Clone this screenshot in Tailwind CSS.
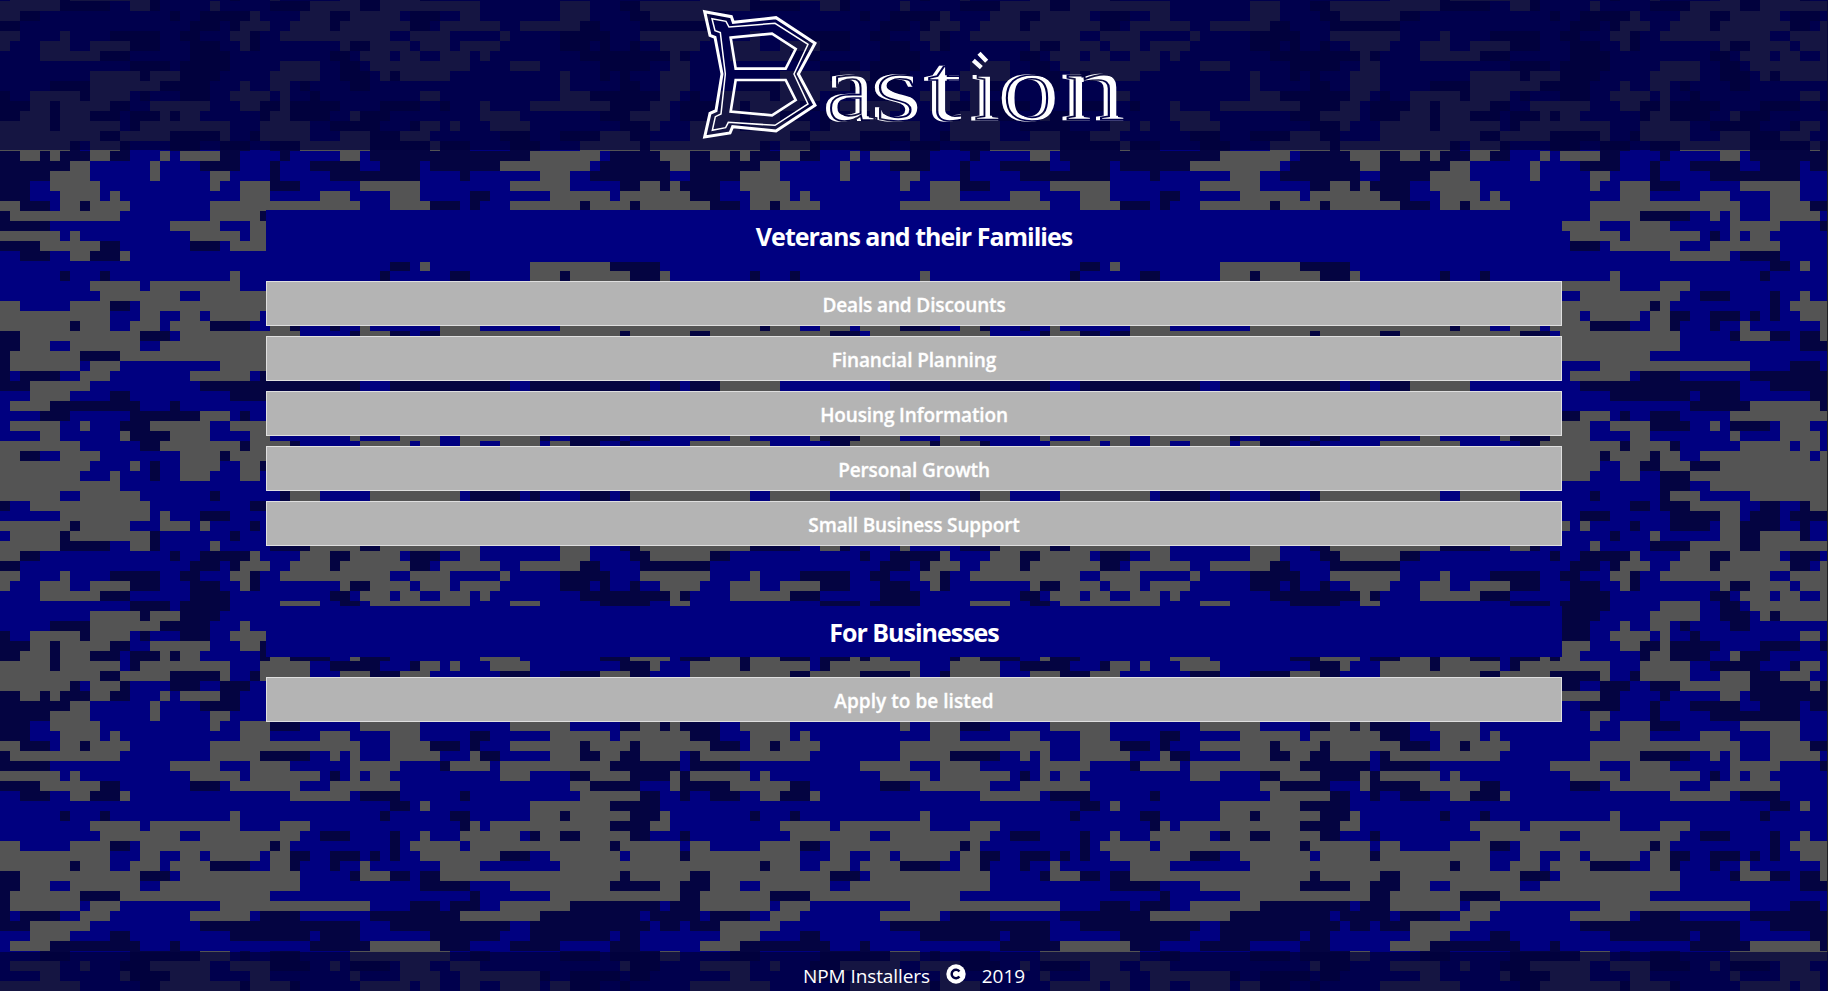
<!DOCTYPE html>
<html lang="en">
<head>
<meta charset="utf-8">
<title>Bastion</title>
<script src="https://cdn.jsdelivr.net/npm/@tailwindcss/browser@4"></script>
</head>
<body class="relative isolate flex h-screen flex-col overflow-hidden bg-[#222222] font-['Open_Sans','Noto_Sans',sans-serif] text-white">
<!-- digital camouflage backdrop -->
<svg class="absolute inset-y-0 left-0 -z-10 h-full w-[1827px]" aria-hidden="true">
  <defs>
    <pattern id="camo" patternUnits="userSpaceOnUse" x="0" y="151" width="690" height="540">
      <rect width="690" height="540" fill="#000080"/>
      <path id="dark" fill="#040441"/>
      <path id="gray" fill="#545454"/>
    </pattern>
  </defs>
  <rect width="100%" height="100%" fill="url(#camo)"/>
</svg>

<header class="flex h-[150px] shrink-0 justify-center bg-[#00003c]/75">
  <svg class="ml-0.5 h-[150px] w-[450px]" viewBox="0 0 1350 450" role="img" aria-label="Bastion">
    <g fill="none" stroke="#fff" stroke-linejoin="miter">
      <path stroke-width="9" d="M44 35 124 50 130 67 258 53 375 130 325 222 375 316 258 393 128 380 120 399 44 411 60 340 78 332 96 222 75 112 60 106Z"/>
      <path stroke-width="4.5" d="M66 56 108 64 117 81 255 70 354 133 312 222 354 312 255 376 115 367 107 383 67 391 76 350 93 342 106 222 91 98 75 92Z"/>
      <path stroke-width="8" d="M122 113 246 101 317 147 287 206 137 206ZM137 240H287L317 300 246 346 122 335Z"/>
      <path stroke-width="13" d="M850 181 874 203M867 160 890 184"/>
    </g>
    <defs>
      <clipPath id="nodot"><rect x="0" y="215" width="1350" height="200"/></clipPath>
      <g id="word" font-family="Liberation Serif, serif" font-size="284">
        <text x="399" y="361" textLength="153" lengthAdjust="spacingAndGlyphs">a</text>
        <text x="542" y="361" textLength="150" lengthAdjust="spacingAndGlyphs">s</text>
        <text x="702" y="361" textLength="110" lengthAdjust="spacingAndGlyphs">t</text>
        <text x="840" y="361" textLength="88" lengthAdjust="spacingAndGlyphs" clip-path="url(#nodot)">i</text>
        <text x="925" y="361" textLength="180" lengthAdjust="spacingAndGlyphs">o</text>
        <text x="1112" y="361" textLength="190" lengthAdjust="spacingAndGlyphs">n</text>
      </g>
      <!-- engraved line running inside each stem -->
      <mask id="inline" maskUnits="userSpaceOnUse" x="0" y="0" width="1350" height="450">
        <rect width="1350" height="450" fill="#fff"/>
        <use href="#word" x="12" fill="none" stroke="#000" stroke-width="5"/>
      </mask>
    </defs>
    <g mask="url(#inline)" fill="#fff" stroke="#fff" stroke-width="5"><use href="#word"/></g>
  </svg>
</header>

<main class="mx-auto flex w-[1296px] flex-1 flex-col gap-[60px] pt-[60px] text-center">
  <section>
    <h2 class="mb-[19px] flex h-[52px] items-center justify-center bg-[#000080] pt-px text-[25px] font-bold tracking-[-1px]">Veterans and their Families</h2>
    <ul class="flex flex-col gap-2.5 text-[19px] font-semibold tracking-[-0.13px] [-webkit-text-stroke:0.3px_white]">
      <li class="flex h-[45px] items-center justify-center border border-[#dfdfdf] bg-[#b4b4b4] pt-1">Deals and Discounts</li>
      <li class="flex h-[45px] items-center justify-center border border-[#dfdfdf] bg-[#b4b4b4] pt-1">Financial Planning</li>
      <li class="flex h-[45px] items-center justify-center border border-[#dfdfdf] bg-[#b4b4b4] pt-1">Housing Information</li>
      <li class="flex h-[45px] items-center justify-center border border-[#dfdfdf] bg-[#b4b4b4] pt-1">Personal Growth</li>
      <li class="flex h-[45px] items-center justify-center border border-[#dfdfdf] bg-[#b4b4b4] pt-1">Small Business Support</li>
    </ul>
  </section>
  <section>
    <h2 class="mb-5 flex h-[51px] items-center justify-center bg-[#000080] pt-0.5 text-[25px] font-bold tracking-[-1px]">For Businesses</h2>
    <ul class="text-[19px] font-semibold tracking-[0.05px] [-webkit-text-stroke:0.3px_white]">
      <li class="flex h-[45px] items-center justify-center border border-[#dfdfdf] bg-[#b4b4b4] pt-1">Apply to be listed</li>
    </ul>
  </section>
</main>

<footer class="flex h-[39px] shrink-0 items-center justify-center bg-[#00003c]/75 pt-2.5 text-[19px] tracking-[-0.1px]">
  <span>NPM Installers</span>
  <svg class="mx-4 mb-1.5 size-5" viewBox="0 0 20 20" aria-label="copyright">
    <circle cx="10" cy="10" r="9.7" fill="#fff"/>
    <path d="M13.4 7.4A4.3 4.3 0 1 0 13.4 12.6" fill="none" stroke="#00003f" stroke-width="2.5"/>
  </svg>
  <span>2019</span>
</footer>

<script>
// One entry per camo row: "gray cell ranges | dark cell ranges" on a 69-column grid of 10px cells.
const rows = `2-4,5-6,9-11,16-17,18-22,34-36,53-60,66-69|0-2,4-5,6-9,11-13,22-24,28-29,37-53,61-66
7-9,15-16,50-59,67-69|0-7,20-24,27-28,31-36,38-42,43-50,60-67
5-9,15-16,21-23,54-57|0-5,27-28,33-42,46-47,59-67
5-10,21-22,24-27,36-42,51-57,64-66,67-68|0-3,27-30,62-64,66-67,68-69
6-10,11-12,24-27,32-35,39-42,55-61,62-69|0-3,47-49
0-2,6-8,9-13,21-36,39-43,51-58,59-63,64-69|2-5,8-9,43-46,47-48,58-59,63-64
1-12,21-26,33-34,35-36,39-44,47-48,55-58,60-62,64-68|0-1,26-31,48-50,58-60,62-64
17-22,25-29,35-40,45-49,50-61|0-5,44-45,61-68
0-6,7-8,19-24,25-32,35-36,37-39,50-53,59-63,67-68|33-34,57-59,63-67,68-69
4-10,23-30,33-40,57-59,67-68|0-4,10-12,19-22,59-64,68-69
7-9,12-13,29-35,58-64|2-5,9-12,36-40,46-47,64-66,68-69
42-43,53-61|39-41,61-66
23-24,53-56,57-63,66-67|6-7,10-11,38-39,45-47,56-57,63-66
9-14,15-24,28-31,47-48,49-61,65-67|46-47,61-65
10-18,20-30,42-43,46-52,54-56,58-63|32-35,39-40,53-54,56-58,63-65,68-69
0-2,7-11,14-27,28-29,41-46,47-61,62-68|11-13,27-28,39-40,61-62
0-11,14-16,18-20,21-26,27-29,42-50,55-62,63-68|29-31,33-36,37-38,39-40,50-53,68-69
0-7,8-11,13-16,17-21,27-29,36-37,44-48,56-69|7-8,21-25,29-30,33-34
2-14,18-30,36-39,44-62,63-69|0-2,14-17,35-36,39-41,42-44,62-63
2-5,7-14,16-30,51-61,66-68|0-2,42-47,61-66,68-69
1-8,12-27,55-68|0-1,8-12,47-48,68-69
1-8,9-12,22-37,50-57|0-1,41-44,45-48,57-66,67-69
8-11,19-25,46-54|0-1,2-6,26-30,37-46,54-64,65-69
3-9|0-3,20-36,39-51,53-65,66-68
3-7|11-13,23-31,32-36,43-50,53-61,62-64
1-5,37-44|5-14,17-18,31-37,44-47,51-56,61-64
20-23,35-45,66-68|4-7,13-20,24-25,27-30,47-49,56-60,61-66
1-6,8-9,15-21,23-27,33-34,40-43,45-48,62-63|12-15,27-31,35-39,63-66
4-6,12-13,17-21,25-27,35-36,40-44,46-54|13-17,54-55,57-62,63-65
0-8,16-24,25-29,36-41,42-44,46-48,50-54,55-57|14-16,24-25,29-30,57-60,62-63
0-2,6-10,18-22,23-27,28-30,32-43,44-46|2-4,22-23,27-28
0-9,13-14,18-22,24-26,28-31,34-46|15-16,26-28,31-34
0-8,11-12,18-21,24-26,31-46|15-16,28-31
0-12,33-46|28-31
0-6,8-14,29-32,37-46,63-69|21-22,28-29,47-52,53-54,58-61,62-63
3-15,31-36,43-46|0-1,25-27,28-31,38-40,42-43
6-15,16-17,34-36|20-23,29-34,37-40,41-45
0-7,8-13,16-19,20-21,34-36|7-8,25-26,29-33,36-40,42-43
1-6,7-15,27-28,34-36,38-42|6-7,15-16,23-24,36-38,42-43
0-6,13-15,21-22,31-36,38-48,56-59,64-69|6-11,15-16,27-31,36-38,62-64
0-2,25-26,30-33,35-40,46-48,56-59,65-69|2-4,17-18,20-25,33-35,41-44,63-65
24-27,29-33,34-41,44-50,52-58|0-2,19-22,23-24,33-34,41-43,58-60,64-69
0-2,6-7,23-25,28-39,41-45,50-51,64-69|11-16,18-20,25-26,56-61
0-1,4-7,9-13,24-25,34-35,37-41,42-45,46-50,66-69|13-16,19-22,25-26,35-37,56-59,60-61,63-64
4-10,36-39,40-42,44-47,48-49,67-68|10-13,19-23,33-35,58-67,68-69
28-32,37-47,51-54,67-69|13-17,18-23,34-36,60-65
9-14,15-18,27-32,38-39,40-45,56-57,66-69|14-15,18-22,34-37,39-40,60-61,62-63
9-16,24-25,27-29,56-57,66-69|5-9,16-21,30-31,35-37,62-64
3-8,9-13,23-27,28-29,42-44,56-59,66-68|0-1,8-9,14-15,18-21,31-32,59-66
3-5,6-11,15-21,24-26,28-29,48-49,53-61,65-67|0-3,5-6,11-13,26-28,29-34,38-42,44-45,61-65,68-69
2-5,6-9,16-17,18-20,27-29,35-36,48-52,63-67|0-2,5-6,9-12,13-16,17-18,26-27,29-33,36-39,60-63,68-69
0-5,6-12,14-23,26-31,42-44,45-46,49-53,65-66|5-6,13-14,33-38,41-42,62-65
0-10,12-17,22-23,26-31,34-37,40-43,60-63|10-12,17-22,25-26,37-40,50-53,56-60,63-65
0-7,9-12,30-37,43-44,58-64,65-69|7-8,12-13,17-20,22-25,27-30,37-43,44-47,51-54,64-65`.split('\n');
const build = side => rows.map((row, y) => row.split('|')[side].split(',').map(run => {
  const [a, b] = run.split('-').map(Number);
  return `M${a * 10} ${y * 10}H${b * 10}v10H${a * 10}z`;
}).join('')).join('');
document.getElementById('gray').setAttribute('d', build(0));
document.getElementById('dark').setAttribute('d', build(1));
</script>
</body>
</html>
